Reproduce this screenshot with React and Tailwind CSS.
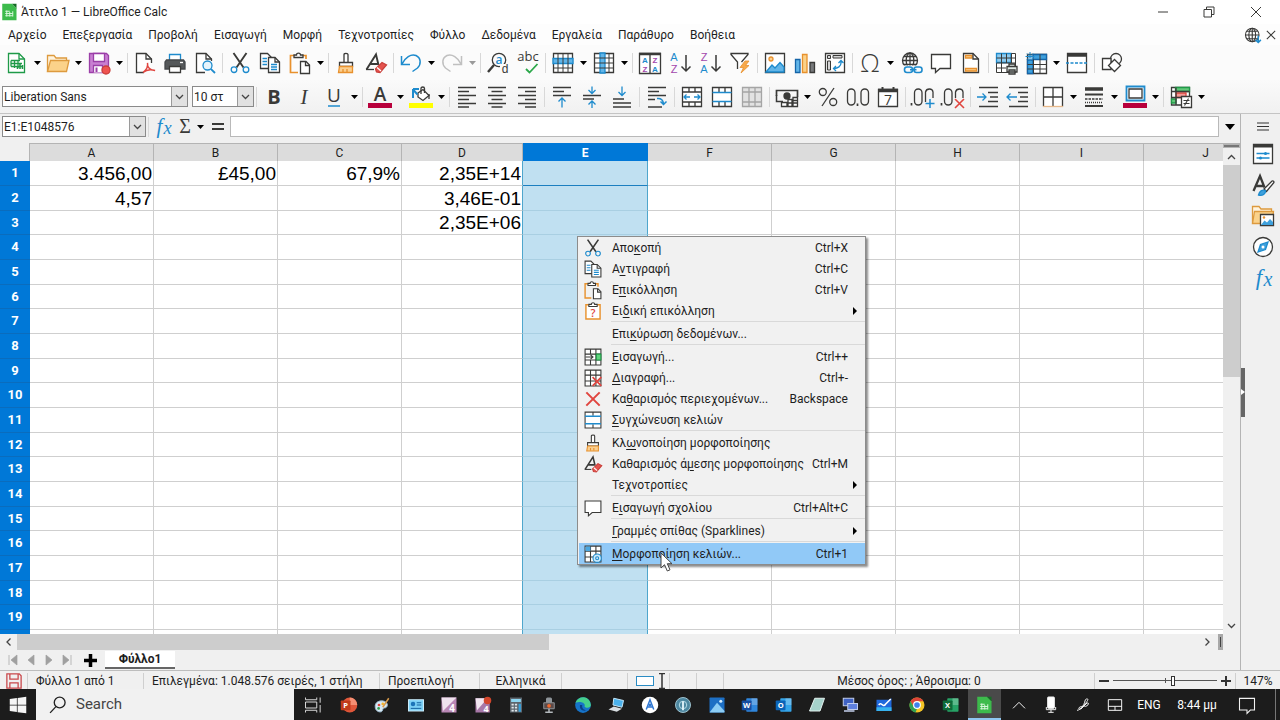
import { useState } from "react";
import clsx from "clsx";

const INK = "#3a3a38";
const BLUE = "#1e8bcd";
const RED = "#e0453f";
const ORANGE = "#e8912d";
const PURPLE = "#a347ad";

function Svg({ size = 24, children, ...props }) {
  return (
    <svg
      width={size}
      height={size}
      viewBox="0 0 24 24"
      fill="none"
      stroke={INK}
      strokeWidth="1.3"
      className="shrink-0 overflow-visible"
      aria-hidden="true"
      {...props}
    >
      {children}
    </svg>
  );
}

function Glyph({ x = 12, y = 18, size = 16, fill = INK, family = "Open Sans", children, ...props }) {
  return (
    <text x={x} y={y} fontSize={size} fill={fill} stroke="none" textAnchor="middle" fontFamily={`"${family}", sans-serif`} {...props}>
      {children}
    </text>
  );
}

function Lines({ rows }) {
  return rows.map(([x1, x2, y]) => <path key={`${x1}-${y}`} d={`M${x1} ${y}H${x2}`} strokeWidth="1.5" />);
}

const icons = {
  newDoc: (
    <>
      <path d="M3.5 2.5H14L19.5 8V21.5H3.5Z" stroke="#1f9a48" fill="#fff" />
      <path d="M14 2.5V8H19.5" stroke="#1f9a48" />
      <path d="M6 9.5H15M6 12.5H17M6 15.5H17M6 9.5V15.5M9.5 9.5V17M13 9.5V17" stroke="#1f9a48" />
      <path d="M12.5 18V15M15 18V12.5M17.5 18V14" stroke="#1f9a48" strokeWidth="1.6" />
    </>
  ),
  open: (
    <>
      <path d="M1.5 20.5V4.5H8L10 7H20.5V9.5" stroke="#dd9a3e" fill="#fff3dd" />
      <path d="M1.5 20.5L4.5 9.5H23L20.5 20.5Z" stroke="#dd9a3e" fill="#fbd28a" />
    </>
  ),
  save: (
    <>
      <path d="M2.5 2.5H19.5L21.5 4.5V21.5H2.5Z" stroke="#9b3fa8" fill="#c87fd2" />
      <path d="M6.5 2.5H17.5V10.5H6.5Z" stroke="#9b3fa8" fill="#fff" />
      <path d="M6.5 21.5V14.5H15.5V21.5" stroke="#9b3fa8" fill="#fff" />
      <path d="M8.5 16.5H10.5V21H8.5Z" fill="#9b3fa8" stroke="none" />
      <circle cx="19" cy="19" r="4" fill="#ef5350" stroke="#c9403b" />
    </>
  ),
  pdf: (
    <>
      <path d="M11 21.5H3.5V2.5H13L18.5 8V12" fill="#fff" />
      <path d="M13 2.5V8H18.5" />
      <path d="M10 21.5C13 19 15.5 16 14.5 12C14 16 17 19.5 22 19.5C17 18 13 19 10 21.5Z" stroke={RED} strokeWidth="1.5" />
    </>
  ),
  print: (
    <>
      <path d="M6.5 9V3.5H17.5V9" stroke={BLUE} fill="#fff" />
      <path d="M3.5 9H20.5L22 11V18H2V11Z" fill="#55585a" stroke="#44474a" />
      <path d="M6.5 15.5H17.5V21.5H6.5Z" fill="#fff" />
      <path d="M17 11.5H20" stroke="#fff" />
    </>
  ),
  preview: (
    <>
      <path d="M12 21.5H3.5V2.5H13L18.5 8V10" fill="#fff" />
      <path d="M13 2.5V8H18.5" />
      <circle cx="14.5" cy="14.5" r="4.5" stroke={BLUE} fill="#e6f4fc" />
      <path d="M17.8 17.8L22 22" stroke={BLUE} strokeWidth="1.8" />
    </>
  ),
  cut: (
    <>
      <path d="M5.5 2L15.5 16.5M18.5 2L8.5 16.5" strokeWidth="1.9" />
      <circle cx="6" cy="18.7" r="2.8" stroke={BLUE} />
      <circle cx="18" cy="18.7" r="2.8" stroke={BLUE} />
    </>
  ),
  copy: (
    <>
      <path d="M2.5 2.5H9.5L13 6V17.5H2.5Z" fill="#fff" />
      <path d="M4.5 7.5H9M4.5 10.5H9M4.5 13.5H9" stroke={BLUE} />
      <path d="M10.5 6.5H17L21.5 11V21.5H10.5Z" fill="#fff" />
      <path d="M17 6.5V11H21.5" />
      <path d="M13 13.5H19M13 16H19M13 18.5H19" stroke={BLUE} />
    </>
  ),
  paste: (
    <>
      <path d="M10 21.5H2.5V4.5H6M14 4.5H18V8" stroke={ORANGE} strokeWidth="1.7" />
      <path d="M6 6.5V4H8.5C8.5 1.5 12.5 1.5 12.5 4H15V6.5Z" fill="#fff" />
      <path d="M12.5 10.5H18L21.5 14V22.5H12.5Z" fill="#fff" />
      <path d="M17.5 10.5V14.5H21.5" />
    </>
  ),
  pasteSpecial: (
    <>
      <path d="M3.5 4.5H20.5V21.5H3.5Z" stroke={ORANGE} strokeWidth="1.7" fill="#fff" />
      <path d="M7 6.5V4H10C10 1.5 14 1.5 14 4H17V6.5Z" fill="#fff" />
      <Glyph y={19} size={13} fill={RED} fontWeight="600">?</Glyph>
    </>
  ),
  clone: (
    <>
      <path d="M10 11V3.5C10 2 14 2 14 3.5V11" fill="#fff" />
      <path d="M5.5 11.5H18.5V15.5H5.5Z" fill="#fff" />
      <path d="M5.5 15.5H18.5V21.5H4.5Z" stroke={ORANGE} fill="#fbcf8f" />
      <path d="M9 18V21M13 18V21" stroke={ORANGE} />
    </>
  ),
  clear: (
    <>
      <path d="M2.5 18.5L12 3.5L14.5 14M6 13H14" strokeWidth="1.9" />
      <path d="M2 18.5H10" />
      <path d="M11.5 18L18 11.5L22.5 14L16 21.5L12.5 21Z" fill="#e5534e" stroke="#c9403b" />
      <path d="M13 16.5L17 20" stroke="#fff" />
    </>
  ),
  undo: <path d="M2.5 5V13.5H11M3 13C6 6.5 12 2.5 17 4.5C22 7 22.5 13 18.5 17L13.5 20.5" stroke={BLUE} strokeWidth="1.5" />,
  redo: <path d="M21.5 5V13.5H13M21 13C18 6.5 12 2.5 7 4.5C2 7 1.5 13 5.5 17L10.5 20.5" stroke="#c0c0c0" strokeWidth="1.5" />,
  find: (
    <>
      <circle cx="13" cy="9" r="6.7" />
      <path d="M8 14L2 21" strokeWidth="2.4" />
      <Glyph x={13} y={13} size={12} fill={BLUE} fontWeight="600">a</Glyph>
      <path d="M14 13H24V24H14Z" fill="#fbfbfb" stroke="none" />
      <Glyph x={19} y={22} size={12} family="Liberation Sans">d</Glyph>
    </>
  ),
  spell: (
    <>
      <Glyph x={12} y={10} size={13}>abc</Glyph>
      <path d="M10 18L13.5 21.5L21.5 13" stroke="#2ba84a" strokeWidth="1.8" />
    </>
  ),
  row: (
    <>
      <path d="M2.5 2.5H21.5V21.5H2.5Z" fill="#fff" />
      <path d="M2 7.5H22V12.5H2Z" fill="#62b5e8" stroke={BLUE} />
      <path d="M2.5 17H21.5M7 2.5V21.5M12 2.5V21.5M17 2.5V21.5" strokeWidth="1" />
    </>
  ),
  column: (
    <>
      <path d="M2.5 2.5H21.5V21.5H2.5Z" fill="#fff" />
      <path d="M8 2H13V22H8Z" fill="#62b5e8" stroke={BLUE} />
      <path d="M2.5 7H21.5M2.5 12H21.5M2.5 17H21.5M17 2.5V21.5" strokeWidth="1" />
    </>
  ),
  sort: (
    <>
      <path d="M1.5 2.5H22.5V22.5H1.5Z" fill="#fff" />
      <path d="M1 3H23" strokeWidth="2.5" />
      <path d="M12 4V22" />
      <Glyph x={7} y={12} size={8} family="Liberation Sans" fill={BLUE} fontWeight="700">A</Glyph>
      <Glyph x={17} y={12} size={8} family="Liberation Sans" fill={PURPLE} fontWeight="700">Z</Glyph>
      <Glyph x={7} y={21} size={8} family="Liberation Sans" fill={PURPLE} fontWeight="700">Z</Glyph>
      <Glyph x={17} y={21} size={8} family="Liberation Sans" fill={BLUE} fontWeight="700">A</Glyph>
    </>
  ),
  ascending: (
    <>
      <Glyph x={6} y={10} size={11} family="Liberation Sans" fill={BLUE}>A</Glyph>
      <Glyph x={6} y={22} size={11} family="Liberation Sans" fill={PURPLE}>Z</Glyph>
      <path d="M18 4V20M13.5 15.5L18 20L22.5 15.5" strokeWidth="1.5" />
    </>
  ),
  descending: (
    <>
      <Glyph x={6} y={10} size={11} family="Liberation Sans" fill={PURPLE}>Z</Glyph>
      <Glyph x={6} y={22} size={11} family="Liberation Sans" fill={BLUE}>A</Glyph>
      <path d="M18 4V20M13.5 15.5L18 20L22.5 15.5" strokeWidth="1.5" />
    </>
  ),
  filter: (
    <>
      <path d="M9.5 18V11L3 3.5V2.5H20V3.5L13.5 11" fill="#fff" />
      <path d="M17 10L12 16.5H15.5L13 22L21 14.5H17.5L21 10Z" fill="#f7a94a" stroke={ORANGE} strokeWidth=".8" />
    </>
  ),
  image: (
    <>
      <path d="M2.5 2.5H21.5V21.5H2.5Z" fill="#fff" />
      <path d="M3 21L9 14L12 17L17 11.5L21 16V21Z" fill="#62b5e8" stroke={BLUE} />
      <circle cx="8" cy="8" r="2" stroke={ORANGE} fill="#fbcf8f" />
    </>
  ),
  chart: (
    <>
      <path d="M2.5 8.5H7V21.5H2.5Z" fill="#62b5e8" stroke="#1565a8" />
      <path d="M9.5 3.5H14V21.5H9.5Z" fill="#fbd28a" stroke={ORANGE} />
      <path d="M17 11.5H21.5V21.5H17Z" fill="#77797b" />
    </>
  ),
  pivot: (
    <>
      <path d="M2.5 2.5H21.5V21.5H2.5Z" fill="#fff" />
      <path d="M4.5 4.5H7.5V7.5H4.5ZM10 4.5H19V7H10ZM4.5 10H7.5V19H4.5Z" fill="#d5d5d5" strokeWidth="1" />
      <path d="M18 10V12C18 15 15 17.5 11 17.5M15.5 12L18 9.5L20.5 12M13 15L10.5 17.5L13 20" stroke={BLUE} />
    </>
  ),
  omega: <Glyph y={21} size={25} fontWeight="300">Ω</Glyph>,
  link: (
    <>
      <circle cx="11" cy="9.5" r="7.5" />
      <path d="M3.5 9.5H18.5M11 2V17M5 5.5H17M5 13.5H17" />
      <ellipse cx="11" cy="9.5" rx="3.8" ry="7.5" />
      <path d="M4 14.5H24V24H4Z" fill="#fafafa" stroke="none" />
      <rect x="5.5" y="16" width="8" height="5.5" rx="2.5" stroke={BLUE} strokeWidth="1.6" />
      <rect x="15" y="16" width="8" height="5.5" rx="2.5" stroke={BLUE} strokeWidth="1.6" />
      <path d="M11 18.7H17.5" stroke={BLUE} strokeWidth="1.6" />
    </>
  ),
  comment: <path d="M2.5 3.5H21.5V17.5H11L6.5 21.5V17.5H2.5Z" fill="#fff" />,
  header: (
    <>
      <path d="M4.5 2.5H14L19.5 8V21.5H4.5Z" fill="#fff" />
      <path d="M6.5 4.5H13V7H6.5ZM6.5 17.5H17.5V20H6.5Z" fill="#fbcf8f" stroke={ORANGE} />
      <path d="M14 2.5V8H19.5" />
    </>
  ),
  printArea: (
    <>
      <path d="M2.5 2.5H21.5V21.5H2.5Z" fill="#fff" strokeWidth="1" />
      <path d="M2.5 2.5H17V11.5H2.5Z" fill="#8ecbef" stroke={BLUE} />
      <path d="M2.5 7H21.5M2.5 12H21.5M2.5 17H12M7.5 2.5V21.5M12.5 2.5V12M17.5 2.5V12" strokeWidth="1" />
      <path d="M13 15.5H23V21H13ZM15 13H21V15.5H15ZM15 19H21V23H15Z" fill="#dfe9e4" />
    </>
  ),
  freeze: (
    <>
      <path d="M3.5 3.5H22.5V22.5H3.5Z" fill="#fff" />
      <path d="M9 3.5H22.5V8.5H9ZM3.5 9H9V22.5H3.5Z" fill="#3ea0dc" stroke="#1565a8" />
      <path d="M3.5 13.5H22.5M3.5 18H22.5M9.5 8V22.5M16 3.5V22.5" strokeWidth="1" />
      <path d="M6 1V10M1.5 5.5H10.5M3 2.5L9 8.5M9 2.5L3 8.5" stroke={BLUE} strokeWidth="1" />
    </>
  ),
  split: (
    <>
      <path d="M2.5 2.5H21.5V21.5H2.5Z" fill="#fff" />
      <path d="M2 4H22" strokeWidth="3.5" />
      <path d="M1 12H23" stroke={BLUE} strokeWidth="1.7" strokeDasharray="3 1.5" />
    </>
  ),
  shapes: (
    <>
      <circle cx="16" cy="8" r="5.5" />
      <path d="M2.5 7.5H11V18.5H2.5Z" fill="#fff" />
      <path d="M14.5 8.5L20.5 14.5L14.5 20.5L8.5 14.5Z" fill="#fff" />
    </>
  ),
  bold: <Glyph y={19} size={20} fontWeight="700">B</Glyph>,
  italic: <Glyph y={19} size={21} family="Liberation Serif" fontStyle="italic">I</Glyph>,
  underline: (
    <>
      <Glyph y={17} size={19}>U</Glyph>
      <path d="M6 21H18" stroke={BLUE} strokeWidth="1.5" />
    </>
  ),
  fontColor: (
    <>
      <Glyph y={16} size={19} fontWeight="600">A</Glyph>
      <path d="M0 20.5H24" stroke="#b8003c" strokeWidth="5" />
    </>
  ),
  highlight: (
    <>
      <path d="M9 8L14 4.5L20 10.5L14 15.5L9 12Z" fill="#fff" />
      <path d="M12 9V3.5C12 1.5 15.5 1.5 15.5 3.5V8" />
      <path d="M20 9V14" />
      <path d="M4 13V4M4 4H10M4 4.5L8.5 9.5" stroke={BLUE} strokeWidth="2" />
      <path d="M0 20.5H24" stroke="#ffff00" strokeWidth="5" />
    </>
  ),
  left: <Lines rows={[[3, 21, 2.5], [3, 14, 6.5], [3, 21, 10.5], [3, 14, 14.5], [3, 21, 18.5], [3, 14, 22]]} />,
  center: <Lines rows={[[3, 21, 2.5], [6.5, 17.5, 6.5], [3, 21, 10.5], [6.5, 17.5, 14.5], [3, 21, 18.5], [6.5, 17.5, 22]]} />,
  right: <Lines rows={[[3, 21, 2.5], [10, 21, 6.5], [3, 21, 10.5], [10, 21, 14.5], [3, 21, 18.5], [10, 21, 22]]} />,
  top: (
    <>
      <Lines rows={[[3, 21, 2.5], [3, 14, 6.5], [3, 21, 10.5]]} />
      <path d="M12 22.5V13.5M8.5 16.5L12 13L15.5 16.5" stroke={BLUE} />
    </>
  ),
  middle: (
    <>
      <Lines rows={[[3, 21, 10.5], [3, 14, 14]]} />
      <path d="M12 1.5V8M8.5 5L12 8.5L15.5 5M12 23V16.5M8.5 19.5L12 16L15.5 19.5" stroke={BLUE} />
    </>
  ),
  bottom: (
    <>
      <Lines rows={[[3, 14, 14], [3, 21, 18], [3, 21, 22]]} />
      <path d="M12 1.5V10M8.5 7L12 10.5L15.5 7" stroke={BLUE} />
    </>
  ),
  wrap: (
    <>
      <Lines rows={[[3, 21, 2.5], [3, 14, 6.5], [3, 21, 10.5], [3, 10, 14.5], [3, 17, 22]]} />
      <path d="M12 13.5C16 13 18 15 18.5 18.5M15.5 16.5L18.5 19.5L21.5 16.5" stroke={BLUE} strokeWidth="1.5" />
    </>
  ),
  mergeCenter: (
    <>
      <path d="M2.5 2.5H21.5V21.5H2.5ZM2.5 7H21.5M2.5 17H21.5M9 2.5V7M15 2.5V7M9 17V21.5M15 17V21.5" fill="#fff" />
      <path d="M4 12H10M14 12H20M6.5 9.5L4 12L6.5 14.5M17.5 9.5L20 12L17.5 14.5" stroke={BLUE} />
    </>
  ),
  merge: (
    <>
      <path d="M2.5 2.5H21.5V21.5H2.5ZM9 2.5V7M15 2.5V7M9 17V21.5M15 17V21.5" fill="#fff" />
      <path d="M2.5 7.5H21.5M2.5 16.5H21.5" stroke={BLUE} />
    </>
  ),
  mergeMenu: (
    <>
      <path d="M2.5 2.5H21.5V21.5H2.5ZM12 2.5V7M12 17V21.5" fill="#fff" />
      <path d="M2.5 7.5H21.5M2.5 16.5H21.5" stroke={BLUE} strokeWidth="2" />
    </>
  ),
  splitCells: <path d="M2.5 2.5H21.5V21.5H2.5ZM2.5 7H21.5M2.5 17H21.5M9 2.5V7M15 2.5V7M9 17V21.5M15 17V21.5M9 7V17M15 7V17" fill="#e2e2e2" stroke="#a5a5a5" />,
  currency: (
    <>
      <path d="M1.5 11V5.5H22.5V12" strokeWidth="1.7" />
      <path d="M1.5 10V16.5H8" strokeWidth="1.5" />
      <circle cx="12" cy="11" r="3" fill={INK} />
      <path d="M6.5 17.5H12V21.5H6.5ZM13 14.5H17V21.5H13ZM18 12.5H22.5V21.5H18ZM13 18H22.5M18 15.5H22.5" fill="#fff" />
    </>
  ),
  percent: (
    <>
      <circle cx="6.8" cy="7" r="3.5" />
      <circle cx="17.2" cy="17" r="3.5" />
      <path d="M18 3L6 21" />
    </>
  ),
  number: (
    <>
      <rect x="1.5" y="4" width="7.5" height="16" rx="3.7" />
      <rect x="15" y="4" width="7.5" height="16" rx="3.7" />
      <path d="M11.5 18.5V21" strokeWidth="1.7" />
    </>
  ),
  date: (
    <>
      <path d="M2.5 4.5H21.5V21.5H2.5Z" fill="#fff" />
      <path d="M2 5.5H22" strokeWidth="3.5" />
      <path d="M6.5 2V7M17.5 2V7" strokeWidth="2" />
      <Glyph y={20} size={14}>7</Glyph>
    </>
  ),
  addDecimal: (
    <>
      <path d="M.5 18V20.5" strokeWidth="1.7" />
      <rect x="3.5" y="4" width="7.5" height="16" rx="3.7" />
      <path d="M14.5 17V7C15.5 3 21.5 3 22 7V13" />
      <path d="M19 14V23M14.5 18.5H23.5" stroke={BLUE} strokeWidth="1.5" />
    </>
  ),
  deleteDecimal: (
    <>
      <path d="M.5 18V20.5" strokeWidth="1.7" />
      <rect x="3.5" y="4" width="7.5" height="16" rx="3.7" />
      <path d="M14.5 13V7C15.5 3 21.5 3 22 7V13" />
      <path d="M14 14L23 23M23 14L14 23" stroke={RED} strokeWidth="1.6" />
    </>
  ),
  indent: (
    <>
      <Lines rows={[[3, 22, 2.5], [12, 22, 7.5], [14, 22, 12], [12, 22, 16.5], [3, 22, 21.5]]} />
      <path d="M1 12H10M6.5 8.5L10 12L6.5 15.5" stroke={BLUE} />
    </>
  ),
  outdent: (
    <>
      <Lines rows={[[3, 22, 2.5], [12, 22, 7.5], [14, 22, 12], [12, 22, 16.5], [3, 22, 21.5]]} />
      <path d="M1 12H11M4.5 8.5L1 12L4.5 15.5" stroke={BLUE} />
    </>
  ),
  borders: (
    <>
      <path d="M2.5 21.5V2.5H21.5V21.5M12 2.5V21.5M2.5 12H21.5" fill="#fff" />
      <path d="M2 21.5H22" stroke="#e8b98a" />
    </>
  ),
  borderStyle: (
    <>
      <path d="M3 4H21" strokeWidth="3.5" />
      <path d="M3 9.5H21" strokeWidth="2" />
      <path d="M3 14H21" strokeDasharray="2.5 1" />
      <path d="M3 17.5H21" strokeDasharray="1 1" />
      <path d="M3 21H21" strokeWidth="2" />
    </>
  ),
  borderColor: (
    <>
      <path d="M3.5 1.5H21.5V15.5H3.5Z" stroke={BLUE} strokeWidth="1.8" fill="#fff" />
      <path d="M6 4H19V13H6Z" />
      <path d="M0 20.5H24" stroke="#b8003c" strokeWidth="5" />
    </>
  ),
  conditional: (
    <>
      <path d="M2.5 2.5H20.5V20H2.5Z" fill="#fff" />
      <path d="M6.5 2.5H20.5V6.5H6.5ZM2.5 14H7V18H2.5Z" fill="#63c97a" stroke="#1f9a48" />
      <path d="M7 8H17V12.5H7Z" fill="#f39a96" stroke={RED} />
      <path d="M7 2.5V20M2.5 6.5H20.5M2.5 12.5H12" />
      <path d="M12.5 11.5H22.5V22.5H12.5Z" fill="#fff" />
      <path d="M14.5 15.5H20.5M14.5 18.5H20.5M19.5 13.5L15.5 20.5" strokeWidth="1.1" />
    </>
  ),
  insertCells: (
    <>
      <path d="M2.5 2.5H21.5V21.5H2.5ZM2.5 8.5H21.5M2.5 15.5H21.5M9 2.5V8.5M15.5 2.5V21.5M9 15.5V21.5" fill="#fff" />
      <path d="M16 8.5H21.5V15.5H16Z" fill="#5fd47c" stroke="#1f9a48" />
      <path d="M3 12H12M9 9.5L12 12L9 14.5" />
    </>
  ),
  deleteCells: (
    <>
      <path d="M2.5 2.5H21.5V21.5H2.5ZM2.5 8.5H21.5M2.5 15.5H21.5M9 2.5V21.5M15.5 2.5V21.5" fill="#fff" />
      <path d="M11.5 11L22 21.5M22 11L11.5 21.5" stroke={RED} strokeWidth="2" />
    </>
  ),
  cross: <path d="M4 4L20 20M20 4L4 20" stroke={RED} strokeWidth="2.4" />,
  formatCells: (
    <>
      <path d="M2.5 2.5H21.5V21.5H2.5ZM2.5 8.5H21.5M2.5 15.5H21.5M9 2.5V21.5M15.5 2.5V21.5" fill="#fff" />
      <path d="M3 3H9V8.5H3Z" fill="#4aa7e0" stroke="none" />
      <circle cx="17" cy="17" r="5" fill="#cdeafb" stroke={BLUE} />
      <circle cx="17" cy="17" r="1.8" stroke={BLUE} />
    </>
  ),
  properties: (
    <>
      <path d="M2.5 2.5H21.5V21.5H2.5Z" fill="#fff" />
      <path d="M2 4H22" strokeWidth="3" />
      <path d="M5.5 11.5H18.5M5.5 16H18.5" stroke={BLUE} />
      <circle cx="14.5" cy="11.5" r="1.5" fill={BLUE} stroke="none" />
      <circle cx="9.5" cy="16" r="1.5" fill={BLUE} stroke="none" />
    </>
  ),
  styles: (
    <>
      <path d="M2.5 18L9 3L13.5 14.5M4.5 13H12" strokeWidth="2.3" />
      <path d="M13 16L21 8C22.5 7.5 23.5 9 22.5 10L15.5 18.5Z" fill="#fff" />
      <path d="M7.5 22C8.5 18 11 16.5 14.5 17.5C15 21 11.5 23 7.5 22Z" fill="#3ea0dc" stroke={BLUE} />
    </>
  ),
  gallery: (
    <>
      <path d="M1.5 19.5V2.5H8L10 5H20.5V9" stroke="#dd9a3e" fill="#fff3dd" />
      <path d="M1.5 19.5L3.5 7.5H22.5L21 19.5Z" stroke="#dd9a3e" fill="#fbd28a" />
      <path d="M9.5 10.5H22.5V21.5H9.5Z" fill="#fff" />
      <path d="M10 21L13.5 16.5L16 18.5L19 15L22 18V21Z" fill="#3ea0dc" stroke="none" />
      <circle cx="13" cy="13.5" r="1.2" fill={ORANGE} stroke="none" />
    </>
  ),
  navigator: (
    <>
      <circle cx="12" cy="12" r="9.5" fill="#fff" />
      <path d="M17 7L14.5 14.5L7 17L9.5 9.5Z" fill="#3ea0dc" stroke={BLUE} />
      <circle cx="12" cy="12" r="1.5" fill="#fff" stroke="none" />
    </>
  ),
  fx: (
    <>
      <Glyph x={8} y={19} size={23} fill={BLUE} family="Liberation Serif" fontStyle="italic">f</Glyph>
      <Glyph x={17} y={20} size={20} fill={BLUE} family="Liberation Serif" fontStyle="italic">x</Glyph>
    </>
  ),
  sum: <Glyph y={19} size={24} family="Liberation Serif">Σ</Glyph>,
  equals: <path d="M6 9H18M6 14H18" strokeWidth="2" />,
  globe: (
    <>
      <circle cx="11" cy="12" r="9" />
      <path d="M2 12H20M11 3V21M4 7H18M4 17H18" />
      <ellipse cx="11" cy="12" rx="4.5" ry="9" />
      <path d="M19 13V22M15.5 18.5L19 22L22.5 18.5" stroke={BLUE} strokeWidth="2" />
    </>
  ),
};

// [icon, label, has drop-down arrow, disabled]; null is a separator
const standardBar = [
  ["newDoc", "Νέο", true], ["open", "Άνοιγμα", true], ["save", "Αποθήκευση", true], null,
  ["pdf", "Εξαγωγή ως PDF"], ["print", "Εκτύπωση"], ["preview", "Προεπισκόπηση"], null,
  ["cut", "Αποκοπή"], ["copy", "Αντιγραφή"], ["paste", "Επικόλληση", true], null,
  ["clone", "Κλωνοποίηση μορφοποίησης"], ["clear", "Καθαρισμός μορφοποίησης"], null,
  ["undo", "Αναίρεση", true], ["redo", "Επανάληψη", true, true], null,
  ["find", "Εύρεση & αντικατάσταση"], ["spell", "Ορθογραφία"], null,
  ["row", "Γραμμή", true], ["column", "Στήλη", true], null,
  ["sort", "Ταξινόμηση"], ["ascending", "Αύξουσα ταξινόμηση"], ["descending", "Φθίνουσα ταξινόμηση"], ["filter", "Αυτόματο φίλτρο"], null,
  ["image", "Εικόνα"], ["chart", "Γράφημα"], ["pivot", "Συγκεντρωτικός πίνακας"], null,
  ["omega", "Ειδικός χαρακτήρας", true], ["link", "Υπερσύνδεσμος"], ["comment", "Σχόλιο"], ["header", "Κεφαλίδες"], null,
  ["printArea", "Περιοχή εκτύπωσης"], ["freeze", "Σταθεροποίηση", true], ["split", "Διαίρεση παραθύρου"], null,
  ["shapes", "Σχήματα"],
];

const formatBar = [
  ["bold", "Έντονα"], ["italic", "Πλάγια"], ["underline", "Υπογράμμιση", true], null,
  ["fontColor", "Χρώμα γραμματοσειράς", true], ["highlight", "Χρώμα παρασκηνίου", true], null,
  ["left", "Στοίχιση αριστερά"], ["center", "Στοίχιση στο κέντρο"], ["right", "Στοίχιση δεξιά"], null,
  ["top", "Στοίχιση πάνω"], ["middle", "Κατακόρυφο κέντρο"], ["bottom", "Στοίχιση κάτω"], null,
  ["wrap", "Αναδίπλωση"], null,
  ["mergeCenter", "Συγχώνευση και κεντράρισμα"], ["merge", "Συγχώνευση"], ["splitCells", "Διαίρεση κελιών"], null,
  ["currency", "Νόμισμα", true], ["percent", "Ποσοστό"], ["number", "Αριθμός"], ["date", "Ημερομηνία"], null,
  ["addDecimal", "Προσθήκη δεκαδικού"], ["deleteDecimal", "Διαγραφή δεκαδικού"], null,
  ["indent", "Αύξηση εσοχής"], ["outdent", "Μείωση εσοχής"], null,
  ["borders", "Περιγράμματα", true], ["borderStyle", "Τεχνοτροπία περιγράμματος", true], ["borderColor", "Χρώμα περιγράμματος", true], null,
  ["conditional", "Υπό όρους", true],
];

const menus = ["Αρχείο", "Επεξεργασία", "Προβολή", "Εισαγωγή", "Μορφή", "Τεχνοτροπίες", "Φύλλο", "Δεδομένα", "Εργαλεία", "Παράθυρο", "Βοήθεια"];

// the character after "_" is the access key
const contextMenu = [
  { icon: "cut", label: "Απο_κοπή", keys: "Ctrl+X" },
  { icon: "copy", label: "Α_ντιγραφή", keys: "Ctrl+C" },
  { icon: "paste", label: "Ε_πικόλληση", keys: "Ctrl+V" },
  { icon: "pasteSpecial", label: "Ει_δική επικόλληση", submenu: true },
  null,
  { label: "Επι_κύρωση δεδομένων..." },
  null,
  { icon: "insertCells", label: "_Εισαγωγή...", keys: "Ctrl++" },
  { icon: "deleteCells", label: "_Διαγραφή...", keys: "Ctrl+-" },
  { icon: "cross", label: "Κα_θαρισμός περιεχομένων...", keys: "Backspace" },
  { icon: "mergeMenu", label: "_Συγχώνευση κελιών" },
  null,
  { icon: "clone", label: "Κλ_ωνοποίηση μορφοποίησης" },
  { icon: "clear", label: "Καθαρισμός ά_μεσης μορφοποίησης", keys: "Ctrl+M" },
  { label: "Τε_χνοτροπίες", submenu: true },
  null,
  { icon: "comment", label: "Ε_ισαγωγή σχολίου", keys: "Ctrl+Alt+C" },
  null,
  { label: "_Γραμμές σπίθας (Sparklines)", submenu: true },
  null,
  { icon: "formatCells", label: "_Μορφοποίηση κελιών...", keys: "Ctrl+1", active: true },
];

const columns = [
  ["A", "w-[124px]"], ["B", "w-[124px]"], ["C", "w-[124px]"], ["D", "w-[121px]"], ["E", "w-[125px]"],
  ["F", "w-[124px]"], ["G", "w-[124px]"], ["H", "w-[124px]"], ["I", "w-[124px]"], ["J", "w-[124px]"],
];

const cells = {
  A1: "3.456,00", B1: "£45,00", C1: "67,9%", D1: "2,35E+14",
  A2: "4,57", D2: "3,46E-01", D3: "2,35E+06",
};

function Arrow({ faded }) {
  return (
    <svg width="7" height="4" viewBox="0 0 7 4" aria-hidden="true">
      <path d="M0 0H7L3.5 4Z" fill={faded ? "#9a9a9a" : "#000"} />
    </svg>
  );
}

function Chevron({ className }) {
  return (
    <svg width="9" height="6" viewBox="0 0 9 6" fill="none" className={className} aria-hidden="true">
      <path d="M1 1L4.5 4.5L8 1" stroke="#444" strokeWidth="1.3" />
    </svg>
  );
}

function Separator() {
  return <span className="mx-[2px] h-5 w-px shrink-0 bg-[#d8d8d8]" />;
}

function Toolbar({ items }) {
  return items.map((item, i) => {
    if (!item) return <Separator key={i} />;
    const [icon, label, dropdown, faded] = item;
    return (
      <div key={icon} className="flex shrink-0">
        <button type="button" aria-label={label} className="flex h-8 w-[30px] items-center justify-center">
          <Svg>{icons[icon]}</Svg>
        </button>
        {dropdown && (
          <button type="button" aria-label={`${label}: επιλογές`} className="flex h-8 w-[11px] items-center justify-center">
            <Arrow faded={faded} />
          </button>
        )}
      </div>
    );
  });
}

function Combo({ label, options, className }) {
  return (
    <div className={clsx("flex h-[21px] shrink-0 border border-[#8a8a8a] bg-white", className)}>
      <select aria-label={label} className="min-w-0 flex-1 appearance-none pl-px outline-none">
        {options.map((option) => (
          <option key={option}>{option}</option>
        ))}
      </select>
      <span className="flex w-4 items-center justify-center border-l border-[#9a9a9a] bg-[#e1e1e1]">
        <Chevron />
      </span>
    </div>
  );
}

function MenuLabel({ text }) {
  const [before, rest] = text.split("_");
  return (
    <span className="whitespace-nowrap">
      {before}
      <u className="underline-offset-2">{rest[0]}</u>
      {rest.slice(1)}
    </span>
  );
}

function ContextMenu() {
  return (
    <div role="menu" className="absolute left-[577px] top-[93px] w-[289px] border border-[#8c8c8c] bg-[#f1f1f1] pl-px shadow-[2px_2px_2px_rgba(0,0,0,0.45)]">
      {contextMenu.map((item, i) =>
        item ? (
          <button
            key={item.label}
            type="button"
            role="menuitem"
            className={clsx("flex h-[21px] w-full items-center text-left", item.active && "bg-[#91c9f7]")}
          >
            <span className="flex w-[33px] shrink-0 pl-1">{item.icon && <Svg size={20}>{icons[item.icon]}</Svg>}</span>
            <MenuLabel text={item.label} />
            <span className="ml-auto pr-[17px]">{item.keys}</span>
            {item.submenu && (
              <svg width="4" height="8" viewBox="0 0 4 8" className="-ml-3 mr-2" aria-hidden="true">
                <path d="M0 0L4 4L0 8Z" fill="#000" />
              </svg>
            )}
          </button>
        ) : (
          <div key={i} className="ml-8 h-[2px] border-t border-[#d9d9d9]" />
        )
      )}
    </div>
  );
}

function Sheet() {
  return (
    <table className="w-[1268px] table-fixed border-separate border-spacing-0">
      <colgroup>
        <col className="w-[30px]" />
        {columns.map(([name, width]) => (
          <col key={name} className={width} />
        ))}
      </colgroup>
      <thead>
        <tr className="h-[18px]">
          <td className="border-r border-[#b4b4b4] bg-[#f0f0f0]" />
          {columns.map(([name]) => (
            <th
              key={name}
              scope="col"
              className={clsx(
                "border-r border-t p-0 leading-4",
                name === "E" ? "border-[#0078d7] bg-[#0078d7] font-bold text-white" : "border-[#b4b4b4] bg-[#dcdcdc] font-normal"
              )}
            >
              {name}
            </th>
          ))}
        </tr>
      </thead>
      <tbody>
        {Array.from({ length: 20 }, (_, i) => i + 1).map((row) => (
          <tr key={row} className="h-[25px] nth-[3n]:h-[24px]">
            <th scope="row" className="border-b border-[#0a6cbd] bg-[#0078d7] p-0 text-[13px] leading-5 font-bold text-white">
              {row}
            </th>
            {columns.map(([name]) => (
              <td
                key={name}
                className={clsx(
                  "border-r border-b p-0 pt-px pr-px text-right font-['Liberation_Sans',sans-serif] text-[19px] leading-5 text-black",
                  name === "D" && "border-r-[#4fa6cc] border-b-[#cfcfcf]",
                  name === "E" && "border-r-[#4fa6cc] bg-[#c0e0f1]",
                  name === "E" && (row === 1 ? "border-b-[#1c7fc0]" : "border-b-[#a9cfe2]"),
                  name !== "D" && name !== "E" && "border-[#cfcfcf]"
                )}
              >
                {cells[name + row]}
              </td>
            ))}
          </tr>
        ))}
      </tbody>
    </table>
  );
}

const officeApp = (letter, dark, light) => (
  <>
    <rect x="7" y="3" width="15" height="18" rx="1" fill={light} stroke="none" />
    <path d="M14 3H22V12H14Z" fill="#fff" fillOpacity=".25" stroke="none" />
    <rect x="1" y="6" width="13" height="13" rx="1" fill={dark} stroke="none" />
    <Glyph x={7.5} y={16} size={10} fill="#fff" fontWeight="700">{letter}</Glyph>
  </>
);

const calcLogo = (
  <>
    <path d="M3 1H16L22 7V23H3Z" fill="#3dbb4c" stroke="none" />
    <path d="M16 1L22 7V1Z" fill="#156b25" stroke="none" />
    <path d="M7 11H13M7 14H17M7 17H17M9 10V18M13 12V18M17 11V18" stroke="#d9f7dd" />
  </>
);

const taskbarApps = [
  ["PowerPoint", <><circle cx="13" cy="12" r="10" fill="#e0573a" stroke="none" /><path d="M13 2A10 10 0 0 1 23 12H13Z" fill="#f58f73" stroke="none" /><rect x="1" y="6" width="13" height="13" rx="1" fill="#c13b1b" stroke="none" /><Glyph x={7.5} y={16} size={10} fill="#fff" fontWeight="700">P</Glyph></>],
  ["Ζωγραφική", <><path d="M3 15C2 9 8 5 15 7C21 9 20 16 15 16C12 16 14 20 11 21C7 22 3 19 3 15Z" fill="#d7e9f5" stroke="#9bb8cc" /><circle cx="8" cy="12" r="1.8" fill="#e0453f" stroke="none" /><circle cx="13" cy="10.5" r="1.8" fill="#f3b32a" stroke="none" /><circle cx="7.5" cy="16.5" r="1.8" fill="#2f9c48" stroke="none" /><path d="M13 15L21 3" stroke="#d89a4a" strokeWidth="2" /></>],
  ["Πίνακας ελέγχου", <><rect x="2" y="5" width="20" height="15" fill="#7cd0f5" stroke="#cdeefd" /><circle cx="8" cy="10.5" r="3" fill="#1d74b8" stroke="none" /><path d="M13 9H19M13 12H19M5 16.5H19" stroke="#14629e" /></>],
  ["Video Editor 4", <><rect x="2" y="2" width="20" height="20" fill="#b987b5" stroke="none" /><path d="M2 2H22L4 20Z" fill="#efe2ee" stroke="none" /><Glyph x={16} y={21} size={13} fill="#fff" fontWeight="700">4</Glyph></>],
  ["Video Recorder 4", <><rect x="2" y="3" width="19" height="19" fill="#a878a8" stroke="none" /><path d="M2 3H18L4 19Z" fill="#f1e6f0" stroke="none" /><circle cx="18" cy="6" r="5" fill="#d2462c" stroke="none" /><Glyph x={16} y={21} size={12} fill="#fff" fontWeight="700">4</Glyph></>],
  ["Αριθμομηχανή", <><rect x="4" y="2" width="16" height="20" fill="#5d666e" stroke="none" /><path d="M5.5 4H18.5V8H5.5Z" fill="#8ed6f0" stroke="none" /><path d="M6 11.5H14M6 15.5H14M6 19.5H14" stroke="#dfe6ea" strokeWidth="2.5" strokeDasharray="3 1.5" /><path d="M17 10.5V21" stroke="#37a3dd" strokeWidth="3" /></>],
  ["Εγγραφή φωνής", <><rect x="8" y="2" width="8" height="10" rx="2" fill="#8e9499" stroke="none" /><path d="M5 9H19V17H5Z" fill="#5b4a48" stroke="#8e9499" /><circle cx="12" cy="13" r="2.5" fill="#f26a2e" stroke="none" /><path d="M12 17V21M7 21.5H17" stroke="#b4b9bd" strokeWidth="2" /></>],
  ["Edge", <><circle cx="12" cy="12" r="10.5" fill="#1673c8" stroke="none" /><path d="M2 9A10.5 10.5 0 0 1 22.5 12C22.5 16 16 17 14 14C16 10 10 6 2 9Z" fill="#45cf8d" stroke="none" /><path d="M8 12C7 17 11 21 17 19C13 19 10 16 11 12Z" fill="#0b3f86" stroke="none" /></>],
  ["Απομακρυσμένη επιφάνεια", <><path d="M9 3L22 6L20 15L8 12Z" fill="#4bb1ec" stroke="#c9e9fb" /><path d="M2 18L9 14L20 17L13 21Z" fill="#d9dee2" stroke="none" /></>],
  ["AnyDesk", <><circle cx="12" cy="12" r="11" fill="#fff" stroke="none" /><path d="M7 18L12 5L17 18M8 14.5H16" stroke="#2f77d2" strokeWidth="2" /><circle cx="12" cy="12" r="2" fill="#2f77d2" stroke="none" /></>],
  ["Δίκτυο", <><circle cx="12" cy="12" r="10" fill="#4c87a0" stroke="#9fc4d2" /><circle cx="12" cy="12" r="5" stroke="#b5dce8" /><path d="M12 7V19" stroke="#dff3f9" strokeWidth="2.5" /></>],
  ["Φωτογραφίες", <><rect x="2" y="2" width="20" height="20" rx="1" fill="#1d6fc4" stroke="none" /><path d="M2 22L12 9L22 20V22Z" fill="#8ccdf5" stroke="none" /><circle cx="17" cy="7" r="2" fill="#d5efff" stroke="none" /></>],
  ["Word", officeApp("W", "#164da0", "#2f86dd")],
  ["Outlook", officeApp("O", "#0b64b8", "#35a5ea")],
  ["Σημειωματάριο", <path d="M9 3H22L16 20H2Z" fill="#a5d2cb" stroke="#e6f5f2" />],
  ["Οθόνες", <><rect x="3" y="3" width="14" height="10" fill="#3f62c4" stroke="#c4d0ee" /><rect x="9" y="10" width="13" height="8" fill="#5f80dd" stroke="#c4d0ee" /><path d="M4 20H18" stroke="#c4d0ee" strokeWidth="2" /></>],
  ["Whiteboard", <><path d="M2 5H18L22 3V20H2Z" fill="#2068dc" stroke="none" /><path d="M2 15H22V20H2Z" fill="#37b3ef" stroke="none" /><path d="M5 12C8 7 11 16 14 11L21 4" stroke="#fff" strokeWidth="2" /></>],
  ["Chrome", <><circle cx="12" cy="12" r="10" fill="#f5c526" stroke="none" /><path d="M3.3 7A10 10 0 0 1 20.7 7H12L7.7 14.5Z" fill="#de4438" stroke="none" /><path d="M3.3 7L7.7 14.5L12 17L10 22A10 10 0 0 1 3.3 7Z" fill="#30a052" stroke="none" /><circle cx="12" cy="12" r="4.5" fill="#3f82ec" stroke="#fff" strokeWidth="1.5" /></>],
  ["Excel", officeApp("X", "#0f6b39", "#27a366")],
  ["LibreOffice Calc", calcLogo],
];

const trayIcons = [
  ["Κρυφά εικονίδια", <path d="M3 17L12 8L21 17" />],
  ["Μικρόφωνο", <><rect x="7" y="0" width="10" height="17" rx="1" fill="#fff" /><path d="M5 15V19H19V15M12 19V23M8 23H16" /></>],
  ["Πένα", <path d="M3 20C8 20 16 10 19 5C21 2 15 2 15 6C13 14 8 20 6 18C4 15 12 13 16 14C20 13 22 8 18 9L9 18" />],
  ["Επιφάνεια αφής", <path d="M2 4H22V20H2ZM2 14H22M12 14V20" />],
];

function Taskbar() {
  return (
    <footer className="flex h-[31px] shrink-0 items-stretch bg-[#1c1c1c] text-white">
      <button type="button" aria-label="Start" className="flex w-9 shrink-0 items-center justify-center">
        <Svg size={18} stroke="none" fill="#f5f5f5">
          <path d="M1 4L10.5 2.7V11.5H1ZM11.5 2.5L23 1V11.5H11.5ZM1 12.5H10.5V21.3L1 20ZM11.5 12.5H23V23L11.5 21.5Z" />
        </Svg>
      </button>
      <label className="flex w-[258px] shrink-0 items-center gap-2 bg-[#f1f1f1] px-3">
        <Svg size={20} strokeWidth="1.6" stroke="#222">
          <circle cx="14" cy="9" r="6.5" />
          <path d="M9.5 14L2.5 21.5" />
        </Svg>
        <input type="text" aria-label="Search" placeholder="Search" className="min-w-0 flex-1 bg-transparent text-[15px] outline-none placeholder:text-[#444]" />
      </label>
      <button type="button" aria-label="Task view" className="flex w-[38px] shrink-0 items-center justify-center">
        <Svg size={18} stroke="#ddd">
          <path d="M2 2V5H17V2M2 22V19H17V22M2 8H17V16H2ZM21.5 2V9M21.5 12V22" />
        </Svg>
      </button>
      <nav aria-label="Εφαρμογές" className="grid w-[669px] shrink-0 grid-cols-20">
        {taskbarApps.map(([name, drawing]) => (
          <button
            key={name}
            type="button"
            aria-label={name}
            className={clsx("flex items-center justify-center", name === "LibreOffice Calc" && "bg-[#4a4a4a] shadow-[inset_0_-2px_#8fc6f0]")}
          >
            <Svg size={18}>{drawing}</Svg>
          </button>
        ))}
      </nav>
      <div className="ml-auto flex items-center">
        {trayIcons.map(([name, drawing]) => (
          <button key={name} type="button" aria-label={name} className="flex w-8 items-center justify-center">
            <Svg size={16} stroke="#f2f2f2" strokeWidth="1.5">{drawing}</Svg>
          </button>
        ))}
        <span className="w-9 text-center">ENG</span>
        <span className="w-[60px] text-center">8:44 μμ</span>
        <button type="button" aria-label="Ειδοποιήσεις" className="flex w-10 items-center justify-center">
          <Svg size={20} stroke="#f2f2f2">
            <path d="M3 4H21V18H16L12 22V18H3Z" />
          </Svg>
        </button>
        <span className="mr-1 ml-2 h-[31px] w-px bg-[#777]" />
      </div>
    </footer>
  );
}

function StatusCell({ className, children }) {
  return <div className={clsx("flex h-4 items-center border-r border-[#cfcfcf]", className)}>{children}</div>;
}

function StatusBar() {
  const [zoom, setZoom] = useState(58);

  return (
    <div className="flex h-[19px] shrink-0 items-center border-t border-[#bdbdbd] bg-[#f0f0f0] pt-px">
      <StatusCell className="w-7 shrink-0 justify-center">
        <Svg size={18} stroke="#c8474a" strokeWidth="1.7">
          <path d="M2.5 2.5H19L21.5 5V21.5H2.5ZM6.5 2.5V9.5H17.5V2.5M6.5 21.5V14.5H17.5V21.5" />
        </Svg>
      </StatusCell>
      <StatusCell className="w-[116px] shrink-0 pl-2">Φύλλο 1 από 1</StatusCell>
      <StatusCell className="w-[236px] shrink-0 pl-2">Επιλεγμένα: 1.048.576 σειρές, 1 στήλη</StatusCell>
      <StatusCell className="w-[100px] shrink-0 pl-2">Προεπιλογή</StatusCell>
      <StatusCell className="w-[82px] shrink-0 justify-center">Ελληνικά</StatusCell>
      <StatusCell className="w-[66px] shrink-0" />
      <StatusCell className="w-[42px] shrink-0 gap-1 pl-2">
        <span className="h-[10px] w-[18px] border border-[#2b8cc4] bg-white" />
        <svg width="8" height="16" viewBox="0 0 8 16" fill="none" stroke="#333" aria-hidden="true">
          <path d="M1 .5H7M4 .5V15.5M1 15.5H7" strokeWidth="1.5" />
        </svg>
      </StatusCell>
      <StatusCell className="w-[27px] shrink-0" />
      <StatusCell className="w-[27px] shrink-0" />
      <StatusCell className="min-w-0 grow justify-center">Μέσος όρος: ; Άθροισμα: 0</StatusCell>
      <StatusCell className="w-[141px] shrink-0 gap-1 px-1">
        <button type="button" aria-label="Σμίκρυνση" className="flex w-[10px] items-center justify-center">
          <span className="h-[2px] w-full bg-[#333]" />
        </button>
        <div className="relative flex flex-1 items-center">
          <input
            type="range"
            aria-label="Εστίαση"
            value={zoom}
            onChange={(e) => setZoom(Number(e.target.value))}
            className="h-px w-full appearance-none bg-[#555] [&::-webkit-slider-thumb]:h-[10px] [&::-webkit-slider-thumb]:w-1 [&::-webkit-slider-thumb]:appearance-none [&::-webkit-slider-thumb]:border [&::-webkit-slider-thumb]:border-[#333] [&::-webkit-slider-thumb]:bg-white"
          />
          <span className="pointer-events-none absolute left-1/2 h-[5px] w-px bg-[#555]" />
        </div>
        <button type="button" aria-label="Μεγέθυνση" className="flex items-center">
          <svg width="10" height="10" viewBox="0 0 10 10" aria-hidden="true">
            <path d="M5 0V10M0 5H10" stroke="#333" strokeWidth="2" />
          </svg>
        </button>
      </StatusCell>
      <span className="w-11 shrink-0 text-center">147%</span>
    </div>
  );
}

function SheetTabs() {
  return (
    <div className="flex h-5 shrink-0 items-center bg-[#f0f0f0]">
      {[
        ["Πρώτο φύλλο", "M1 1V11M9 1L3 6L9 11Z"],
        ["Προηγούμενο φύλλο", "M8 1L2 6L8 11Z"],
        ["Επόμενο φύλλο", "M2 1L8 6L2 11Z"],
        ["Τελευταίο φύλλο", "M1 1L7 6L1 11ZM9 1V11"],
      ].map(([name, d]) => (
        <button key={name} type="button" aria-label={name} className="flex w-[18px] justify-center first:ml-1">
          <svg width="10" height="12" viewBox="0 0 10 12" aria-hidden="true">
            <path d={d} fill="#a0a0a0" stroke="#a0a0a0" strokeWidth=".7" />
          </svg>
        </button>
      ))}
      <button type="button" aria-label="Προσθήκη φύλλου" className="flex w-[29px] justify-center">
        <svg width="13" height="13" viewBox="0 0 13 13" aria-hidden="true">
          <path d="M6.5 0V13M0 6.5H13" stroke="#000" strokeWidth="3.5" />
        </svg>
      </button>
      <button type="button" className="h-[18px] w-[70px] border-b-2 border-[#666] bg-white text-center leading-4 font-bold">
        Φύλλο1
      </button>
    </div>
  );
}

export default function App() {
  return (
    <div className="flex h-screen flex-col overflow-hidden bg-[#f0f0f0] font-[Roboto,'Noto_Sans',sans-serif] text-xs text-[#1e1e1e]">
      <header className="flex h-6 shrink-0 items-center bg-white">
        <Svg size={18}>{calcLogo}</Svg>
        <h1 className="ml-[3px]">Άτιτλο 1 — LibreOffice Calc</h1>
        <div className="ml-auto flex items-center">
          <button type="button" aria-label="Ελαχιστοποίηση" className="flex w-[46px] justify-center">
            <Svg size={12} strokeWidth="2"><path d="M2 12H22" /></Svg>
          </button>
          <button type="button" aria-label="Επαναφορά" className="flex w-[46px] justify-center">
            <Svg size={12} strokeWidth="2"><path d="M2 7H17V22H2ZM7 7V2H22V17H17" /></Svg>
          </button>
          <button type="button" aria-label="Κλείσιμο" className="flex w-12 justify-center">
            <Svg size={12} strokeWidth="2"><path d="M2 2L22 22M22 2L2 22" /></Svg>
          </button>
        </div>
      </header>

      <nav className="flex h-[21px] shrink-0 items-center bg-[#fdfdfd]">
        {menus.map((menu) => (
          <button key={menu} type="button" className="px-2">
            {menu}
          </button>
        ))}
        <div className="mr-1 ml-auto flex items-center gap-1">
          <button type="button" aria-label="Ενημέρωση"><Svg size={18} strokeWidth="1.5">{icons.globe}</Svg></button>
          <button type="button" aria-label="Κλείσιμο εγγράφου"><Svg size={10} strokeWidth="2.5"><path d="M2 2L22 22M22 2L2 22" /></Svg></button>
        </div>
      </nav>

      <div className="flex h-[35px] shrink-0 items-center bg-[#fbfbfb] pl-[2px]">
        <Toolbar items={standardBar} />
      </div>
      <div className="flex h-[34px] shrink-0 items-center border-b border-[#c4c4c4] bg-gradient-to-b from-[#fafafa] to-[#f1f1f1] pl-[2px]">
        <Combo label="Γραμματοσειρά" options={["Liberation Sans"]} className="mr-1 w-[186px]" />
        <Combo label="Μέγεθος" options={["10 στ"]} className="w-[62px]" />
        <Separator />
        <Toolbar items={formatBar} />
      </div>

      <main className="flex min-h-0 flex-1">
        <div className="flex min-w-0 flex-1 flex-col">
          <div className="flex h-[29px] shrink-0 items-center pb-1 pl-[2px]">
            <Combo label="Πλαίσιο ονόματος" options={["E1:E1048576"]} className="w-36" />
            <Separator />
            <button type="button" aria-label="Οδηγός συναρτήσεων" className="px-px"><Svg size={22}>{icons.fx}</Svg></button>
            <button type="button" aria-label="Άθροιση"><Svg size={20}>{icons.sum}</Svg></button>
            <button type="button" aria-label="Επιλογή συνάρτησης" className="flex w-[11px] justify-center"><Arrow /></button>
            <button type="button" aria-label="Τύπος"><Svg size={24}>{icons.equals}</Svg></button>
            <input type="text" aria-label="Γραμμή εισαγωγής" className="h-[21px] min-w-0 flex-1 border border-[#b9b9b9] bg-white px-1 outline-none" />
            <button type="button" aria-label="Ανάπτυξη γραμμής" className="flex w-[21px] justify-center">
              <svg width="10" height="6" viewBox="0 0 10 6" aria-hidden="true"><path d="M0 0H10L5 6Z" fill="#000" /></svg>
            </button>
          </div>

          <div className="flex min-h-0 flex-1">
            <div className="relative min-w-0 flex-1 overflow-hidden bg-white">
              <Sheet />
              <ContextMenu />
              <svg width="14" height="21" viewBox="0 0 14 21" className="absolute top-[409px] left-[660px]" aria-hidden="true">
                <path d="M1 1V16L4.5 12.7L7.3 19L10 17.8L7.3 11.7H12Z" fill="#fff" stroke="#444" />
              </svg>
            </div>
            <div className="flex w-[17px] shrink-0 flex-col bg-[#f0f0f0]">
              <span className="flex h-[5px] items-center bg-[#b5b5b5] px-px"><span className="h-[2px] w-full bg-[#777]" /></span>
              <button type="button" aria-label="Κύλιση πάνω" className="flex h-[17px] items-center justify-center"><Chevron className="rotate-180" /></button>
              <div className="flex-1"><div className="h-[47%] bg-[#cdcdcd]" /></div>
              <button type="button" aria-label="Κύλιση κάτω" className="flex h-[17px] items-center justify-center"><Chevron /></button>
            </div>
          </div>

          <div className="flex h-4 shrink-0 bg-[#f0f0f0] pr-[17px]">
            <button type="button" aria-label="Κύλιση αριστερά" className="flex w-[17px] items-center justify-center"><Chevron className="rotate-90" /></button>
            <div className="flex-1"><div className="h-full w-[45%] bg-[#cdcdcd]" /></div>
            <button type="button" aria-label="Κύλιση δεξιά" className="flex w-[17px] items-center justify-center"><Chevron className="-rotate-90" /></button>
            <span className="ml-[2px] flex w-[5px] justify-center bg-[#a8a8a8] py-[3px]"><span className="w-px bg-[#444]" /></span>
          </div>
          <SheetTabs />
        </div>

        <aside className="flex w-10 shrink-0 border-l border-[#b4b4b4]">
          <button type="button" aria-label="Απόκρυψη πλευρικής στήλης" className="flex h-[49px] w-1 items-center self-center bg-[#666]">
            <svg width="4" height="6" viewBox="0 0 4 6" aria-hidden="true"><path d="M0 0L4 3L0 6Z" fill="#fff" /></svg>
          </button>
          <div className="flex flex-1 flex-col items-center gap-[7px]">
            <button type="button" aria-label="Ρυθμίσεις πλευρικής στήλης" className="flex h-[21px] items-end pb-1">
              <svg width="12" height="9" viewBox="0 0 12 9" aria-hidden="true"><path d="M0 1H12M0 4.5H12M0 8H12" stroke="#333" strokeWidth="1.2" /></svg>
            </button>
            {["properties", "styles", "gallery", "navigator", "fx"].map((name) => (
              <button key={name} type="button" aria-label={name}><Svg>{icons[name]}</Svg></button>
            ))}
          </div>
        </aside>
      </main>

      <StatusBar />
      <Taskbar />
    </div>
  );
}
